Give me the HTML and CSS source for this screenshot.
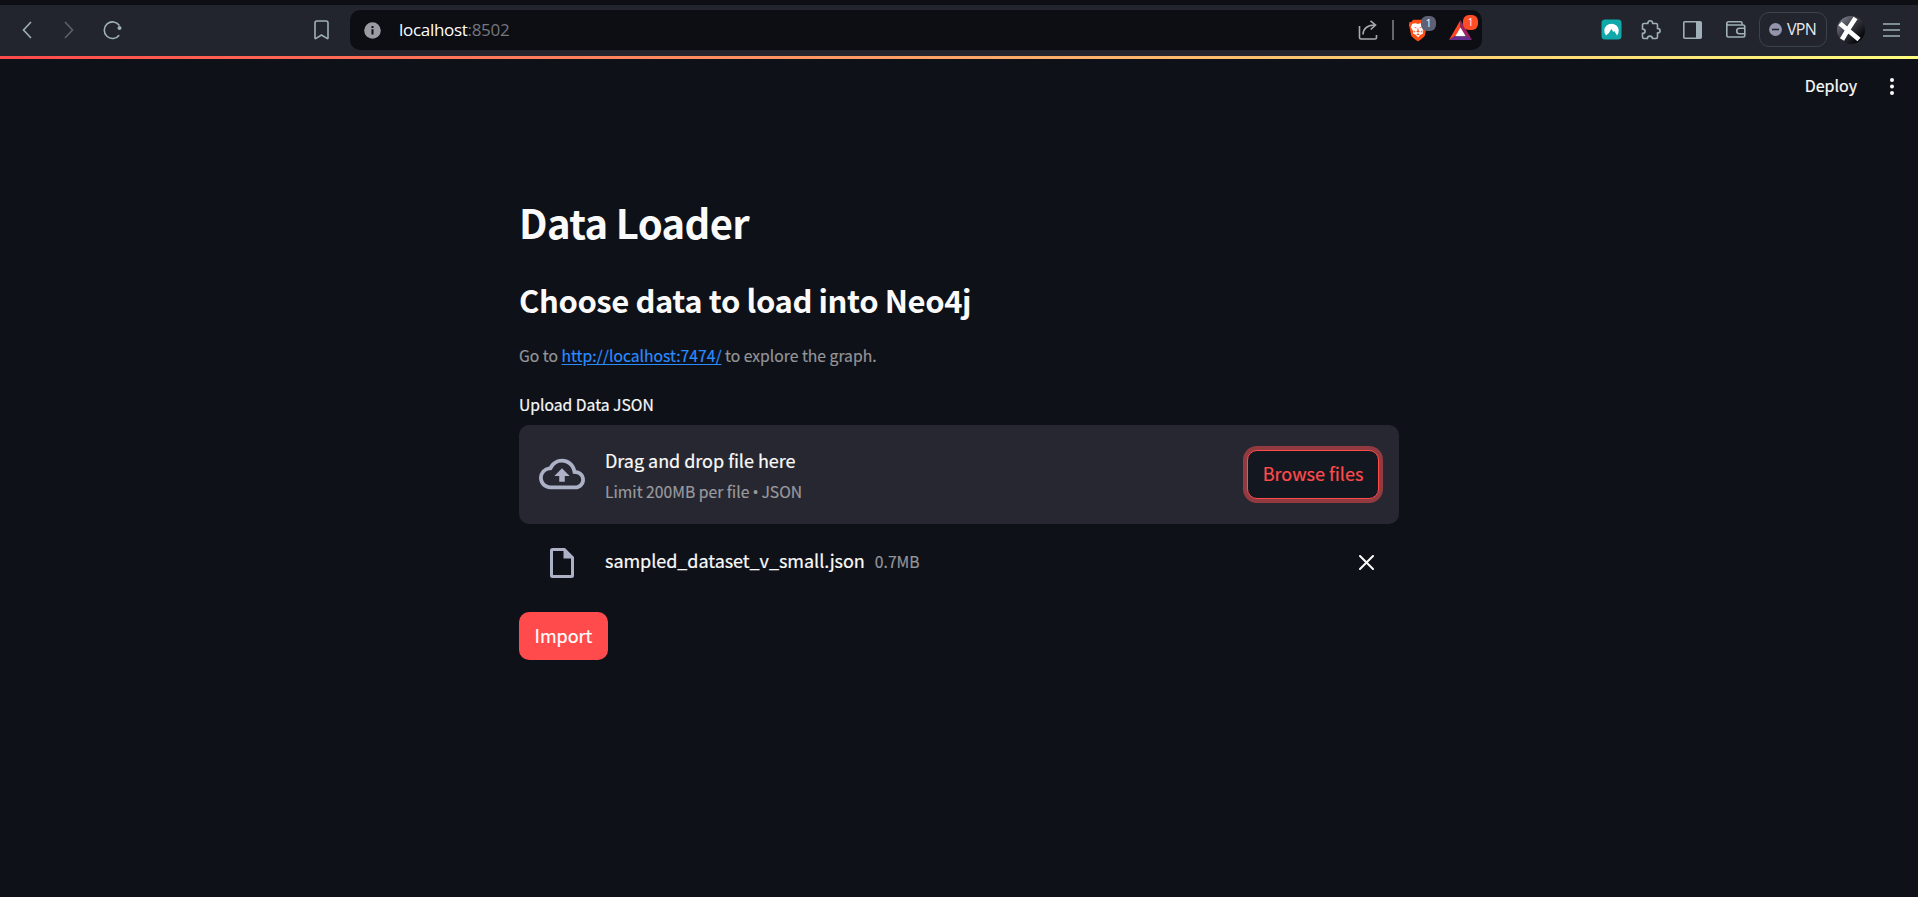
FILE: index.html
```html
<!DOCTYPE html>
<html lang="en">
<head>
<meta charset="utf-8">
<title>Data Loader</title>
<link rel="stylesheet" href="styles.css">
</head>
<body>
<header class="toolbar">
  <nav class="nav">
    <svg class="ic back" width="10" height="18" viewBox="0 0 10 18"><path d="M9 1 1.500 9 9 17"/></svg>
    <svg class="ic forward" width="10" height="18" viewBox="0 0 10 18"><path d="M1 1 8.500 9 1 17"/></svg>
    <svg class="ic reload" width="20" height="20" viewBox="0 0 20 20"><path d="M16.200 15.200A8.300 8.300 0 1 1 16.400 5.500"/><circle cx="16.500" cy="8" r="2" class="solid"/></svg>
    <svg class="ic bookmark" width="15" height="20" viewBox="0 0 15 20"><path d="M1 18V3a2 2 0 0 1 2-2h9a2 2 0 0 1 2 2v15q0 1-1 .4L7.500 15 2 18.400Q1 19 1 18Z"/></svg>
  </nav>
  <div class="address">
    <svg class="info" width="17" height="17" viewBox="0 0 17 17"><circle cx="8.500" cy="8.500" r="8.300" fill="#9b9ca3"/><path d="M7.500 4h2v2h-2zM7.500 7.300h2v5.200h-2z" fill="#0d0e13"/></svg>
    <span class="url">localhost<span class="port">:8502</span></span>
    <svg class="share" width="20" height="20" viewBox="0 0 20 20"><path d="M1.500 6v11.500q0 1.500 1.500 1.500h14q1.500 0 1.500-1.500V15M5 14.500Q5.300 5.500 16.500 5M12.500.8 17.500 5l-4.800 4.500"/></svg>
    <span class="divider"></span>
    <span class="ext shield">
      <svg width="20" height="23" viewBox="0 0 20 24"><path d="M5 .8h10l2 2.200 2-.2.500 4-.7 2-1.600 8.500Q16.500 19 10 23.500 3.500 19 2.800 17.300L1.200 8.800.5 6.800 1 3.200 3 3Z" fill="#fb4f14"/><path d="m4 5 3.500-.6L10 5.200l2.500-.8L16 5l1.500 3.500-2.600 4.200.3 2.300-3 1.700L10 19.300l-2.200-2.600-3-1.700.3-2.300L2.500 8.500Z" fill="#fff"/><path d="m5.500 8 3 .8-.4 1ZM14.500 8l-3 .8.4 1ZM9.500 10h1l.2 2.600 1.300.6L10 14.200l-2-1 1.300-.6ZM5.300 11.500l2.200 2-1.200.6ZM14.700 11.500l-2.200 2 1.200.6ZM8.200 16l1.800-.8 1.800.8-1.800 1.100Z" fill="#fb4f14"/></svg>
      <b class="badge">1</b>
    </span>
    <span class="ext rewards">
      <svg width="23" height="20" viewBox="0 0 23 20"><path d="M11.500 0 0 20l11.500-7Z" fill="#ff4724"/><path d="M11.500 0 23 20l-11.500-7Z" fill="#9e1f63"/><path d="M0 20h23l-5-3.500H5Z" fill="#662d91"/><path d="m11.500 7.500 5.200 8.700H6.300Z" fill="#fff"/></svg>
      <b class="badge hot">1</b>
    </span>
  </div>
  <div class="tools">
    <svg class="nord" width="21" height="21" viewBox="0 0 21 21"><rect x=".5" y=".5" width="20" height="20" rx="3.500" fill="#0fa9aa"/><path d="M5 16.500A7.200 7.200 0 1 1 16 16.500L13.300 12l-1.200 1-1.600-3.200L7.700 14.200Z" fill="#fff"/></svg>
    <svg class="ic puzzle" width="20" height="20" viewBox="0 0 20 20"><path d="M3 3.500h3.800C7-.1 11.500-.1 11.700 3.500H15q1.500 0 1.500 1.500v3.500c3.500.2 3.500 4.300 0 4.600V17q0 1.500-1.500 1.500h-3.500c-.4-3.200-4.800-3.200-5.200 0H3q-1.500 0-1.500-1.500v-3.600C5 13.200 5 9.200 1.500 9V5q0-1.500 1.500-1.500Z"/></svg>
    <svg class="ic panel" width="19" height="18" viewBox="0 0 19 18"><rect x=".8" y=".8" width="17.400" height="16.400" rx="1"/><path class="solid" d="M13 1h5v16h-5z"/></svg>
    <svg class="ic wallet" width="20" height="17" viewBox="0 0 20 17"><path d="M16 4V2q0-1.200-1.200-1.200H2.500Q.8.800.8 2.500v11.800Q.8 16 2.500 16H17q1.800 0 1.800-1.700v-8.600Q18.800 4 17 4H2.500Q.8 4 .8 2.500M18.800 7.200H13.500a2.800 2.800 0 0 0 0 5.600h5.300"/></svg>
    <span class="vpn"><svg width="13" height="13" viewBox="0 0 13 13"><circle cx="6.500" cy="6.500" r="6.400" fill="#9395ac"/><path d="M3 5.700h7v1.600H3z" fill="#24262f"/></svg>VPN</span>
    <svg class="avatar" width="28" height="28" viewBox="0 0 28 28"><defs><linearGradient id="disc" x1=".2" x2=".9" y1="0" y2=".7"><stop offset="0" stop-color="#7b7d88"/><stop offset=".45" stop-color="#3b3d46"/><stop offset="1" stop-color="#08090c"/></linearGradient><clipPath id="round"><circle cx="14" cy="14" r="14"/></clipPath></defs><g clip-path="url(#round)"><path d="M0 0h28v28H0z" fill="url(#disc)"/><path d="M3 7.500 22 23.500M18.500 2Q11 13 5 23.500" fill="none" stroke="#fff" stroke-width="4.800"/></g></svg>
    <svg class="ic menu" width="17" height="14" viewBox="0 0 17 14"><path d="M0 1h17M0 7h17M0 13h17"/></svg>
  </div>
</header>
<div class="rainbow"></div>
<div class="appbar">
  <span class="deploy">Deploy</span>
  <svg class="kebab" width="4" height="17" viewBox="0 0 4 17"><circle cx="2" cy="2" r="2"/><circle cx="2" cy="8.500" r="2"/><circle cx="2" cy="15" r="2"/></svg>
</div>
<main class="content">
  <h1 class="title">Data Loader</h1>
  <h2 class="subtitle">Choose data to load into Neo4j</h2>
  <p class="caption">Go to <a class="link" href="#">http://localhost:7474/</a> to explore the graph.</p>
  <div class="label">Upload Data JSON</div>
  <section class="dropzone">
    <svg class="cloud" width="46" height="32" viewBox="0 4 24 16"><path d="M19.350 10.040A7.490 7.490 0 0 0 12 4C9.110 4 6.600 5.640 5.350 8.040A5.994 5.994 0 0 0 0 14c0 3.310 2.690 6 6 6h13c2.760 0 5-2.240 5-5 0-2.640-2.050-4.780-4.650-4.960zM19 18H6c-2.210 0-4-1.790-4-4 0-2.050 1.530-3.760 3.560-3.970l1.070-.11.500-.95A5.469 5.469 0 0 1 12 6c2.620 0 4.880 1.860 5.390 4.430l.3 1.500 1.530.11A2.980 2.980 0 0 1 22 15c0 1.650-1.350 3-3 3zM8 13h2.550v3h2.900v-3H16l-4-4z"/></svg>
    <div class="hint">
      <span class="drag">Drag and drop file here</span>
      <span class="limit">Limit 200MB per file <span class="bullet">•</span> JSON</span>
    </div>
    <button class="browse">Browse files</button>
  </section>
  <div class="file">
    <svg class="doc" width="24" height="30" viewBox="0 0 24 30"><path fill-rule="evenodd" d="M2.500 0H15l9 9v18.500q0 2.500-2.500 2.500h-19Q0 30 0 27.500v-25Q0 0 2.500 0ZM3 3v24h18V10.500h-7.500V3Z"/></svg>
    <span class="filename">sampled_dataset_v_small.json</span>
    <span class="size">0.7MB</span>
    <svg class="close" width="15" height="15" viewBox="0 0 15 15"><path d="m1 1 13 13M14 1 1 14"/></svg>
  </div>
  <button class="import">Import</button>
</main>
</body>
</html>
```
FILE: styles.css
```css
* { box-sizing: border-box; }
body {
  margin: 0;
  height: 897px;
  overflow: hidden;
  background: #0e1117;
  color: #fafafa;
  font-family: "Noto Sans CJK SC", "Source Sans Pro", sans-serif;
  white-space: nowrap;
}
svg { display: block; flex: none; }
h1, h2, p { margin: 0; }
button { margin: 0; font: inherit; }

.toolbar {
  display: flex;
  align-items: center;
  height: 56px;
  border-top: 5px solid #0e0f14;
  background: #23252e;
}
.ic { fill: none; stroke: #9fb0b8; stroke-width: 1.6; }
.ic .solid { fill: #9fb0b8; stroke: none; }
.nav { display: flex; align-items: center; width: 350px; margin-top: -2px; padding-left: 22px; flex: none; }
.forward { margin-left: 32px; stroke: #59616a; }
.reload { margin-left: 29px; }
.bookmark { margin-left: 191px; }
.address {
  display: flex;
  align-items: center;
  width: 1132px;
  height: 40px;
  margin-top: -1px;
  padding-left: 14px;
  border-radius: 10px;
  background: #0d0e13;
  flex: none;
}
.url { margin-left: 18px; width: 953px; font: 17px/24px "Open Sans", sans-serif; letter-spacing: -.3px; color: #fff; }
.port { color: #75777c; }
.share { margin-left: 6px; fill: none; stroke: #a9aaae; stroke-width: 1.6; }
.divider { width: 2px; height: 20px; margin-left: 14px; background: #66676c; }
.ext { position: relative; }
.shield { margin-left: 14px; }
.rewards { margin-left: 21px; }
.badge {
  position: absolute;
  top: -3px;
  left: 13px;
  width: 15px;
  height: 15px;
  border-radius: 6px;
  background: #5e6175;
  color: #fff;
  font: 10px/15px "Open Sans", sans-serif;
  text-align: center;
}
.hot { top: -5px; left: 14px; background: #ff4d24; }
.tools { display: flex; align-items: center; margin-top: -2px; margin-left: 119px; }
.puzzle { margin-left: 19px; }
.panel { margin-left: 22px; }
.wallet { margin-left: 24px; }
.vpn {
  display: flex;
  align-items: center;
  gap: 5px;
  width: 68px;
  height: 35px;
  margin-left: 13px;
  padding: 0 0 1px 9px;
  border: 1px solid #3b444c;
  border-radius: 10px;
  color: #e8e9ec;
  font: 16px/20px "Open Sans", sans-serif;
  letter-spacing: -.7px;
}
.avatar { margin-left: 10px; }
.menu { margin-left: 18px; }
.rainbow { height: 3px; background: linear-gradient(90deg, #ff4b4b, #fffd80); }

.appbar { display: flex; align-items: center; justify-content: flex-end; height: 55px; padding-right: 24px; }
.deploy { padding-bottom: 3px; font-size: 16px; line-height: 24px; -webkit-text-stroke: .2px; }
.kebab { margin-left: 33px; fill: #fafafa; }

.content { width: 880px; margin: 0 auto; padding-top: 78px; }
.title { font-size: 40px; line-height: 60px; font-weight: 600; letter-spacing: -.65px; }
.subtitle { margin-top: 25px; font-size: 31px; line-height: 46px; font-weight: 600; letter-spacing: -.4px; }
.caption { margin-top: 19px; font-size: 15.7px; line-height: 28px; color: #949599; }
.link { color: #2b8cff; text-decoration: underline; text-underline-offset: 2px; }
.label { margin-top: 21px; font-size: 15.7px; line-height: 28px; }
.caption, .label, .drag, .limit, .filename, .size, .browse, .import { -webkit-text-stroke: .2px; }
.dropzone {
  display: flex;
  align-items: center;
  height: 99px;
  margin-top: 6px;
  padding: 0 20px;
  border-radius: 10px;
  background: #262730;
}
.cloud { margin-top: -1px; fill: #acb1c6; }
.hint { display: flex; flex-direction: column; gap: 3px; margin-left: 20px; padding-top: 2px; flex: 1; }
.drag { font-size: 18px; line-height: 30px; letter-spacing: -.03px; }
.limit { font-size: 15.7px; line-height: 28px; color: #9a9a9f; }
.bullet { font: 16px/20px "Open Sans", sans-serif; margin: 0 -.5px; }
.browse {
  width: 132px;
  height: 49px;
  padding: 0 0 3px;
  border: 1px solid #ff4b4b;
  border-radius: 10px;
  background: #131720;
  box-shadow: 0 0 0 4px #933a40;
  color: #ff4b4b;
  font-size: 18px;
  line-height: 30px;
}
.file { display: flex; align-items: center; height: 76px; padding: 0 25px 0 31px; }
.doc { margin-top: 2px; fill: #acb1c6; }
.filename { margin-left: 31px; padding-bottom: 4px; font-size: 18px; line-height: 30px; letter-spacing: -.04px; }
.size { margin-left: 10px; font-size: 15.7px; line-height: 28px; color: #949599; }
.close { margin-left: auto; stroke: #fafafa; stroke-width: 2; stroke-linecap: round; }
.import {
  display: block;
  width: 89px;
  height: 48px;
  margin-top: 12px;
  padding: 0 0 3px;
  border: 0;
  border-radius: 10px;
  background: #ff4b4b;
  color: #fff;
  font-size: 18px;
  line-height: 30px;
}
```
